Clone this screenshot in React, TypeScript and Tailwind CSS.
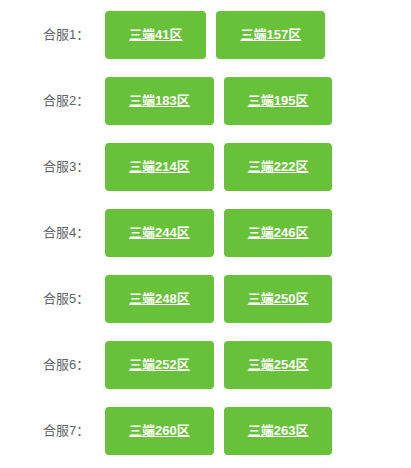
const groups: { label: string; servers: string[] }[] = [
  { label: "合服1：", servers: ["三端41区", "三端157区"] },
  { label: "合服2：", servers: ["三端183区", "三端195区"] },
  { label: "合服3：", servers: ["三端214区", "三端222区"] },
  { label: "合服4：", servers: ["三端244区", "三端246区"] },
  { label: "合服5：", servers: ["三端248区", "三端250区"] },
  { label: "合服6：", servers: ["三端252区", "三端254区"] },
  { label: "合服7：", servers: ["三端260区", "三端263区"] },
];

export default function App() {
  return (
    <div
      className="bg-white w-[411px] h-[468px] pt-[11px] pl-[43px]"
      style={{ fontFamily: '"Liberation Sans", "Noto Sans CJK SC", sans-serif' }}
    >
      <div className="flex flex-col gap-[18px]">
        {groups.map((g) => (
          <div key={g.label} className="flex items-center">
            <span className="w-[62px] text-[13px] text-[#606266]">{g.label}</span>
            <div className="flex gap-[10px]">
              {g.servers.map((s) => (
                <a
                  key={s}
                  href="#"
                  className="h-12 w-fit px-6 flex items-center justify-center rounded bg-[#67c23a] text-white text-[13px] font-bold underline underline-offset-1 decoration-1"
                >
                  {s}
                </a>
              ))}
            </div>
          </div>
        ))}
      </div>
    </div>
  );
}
